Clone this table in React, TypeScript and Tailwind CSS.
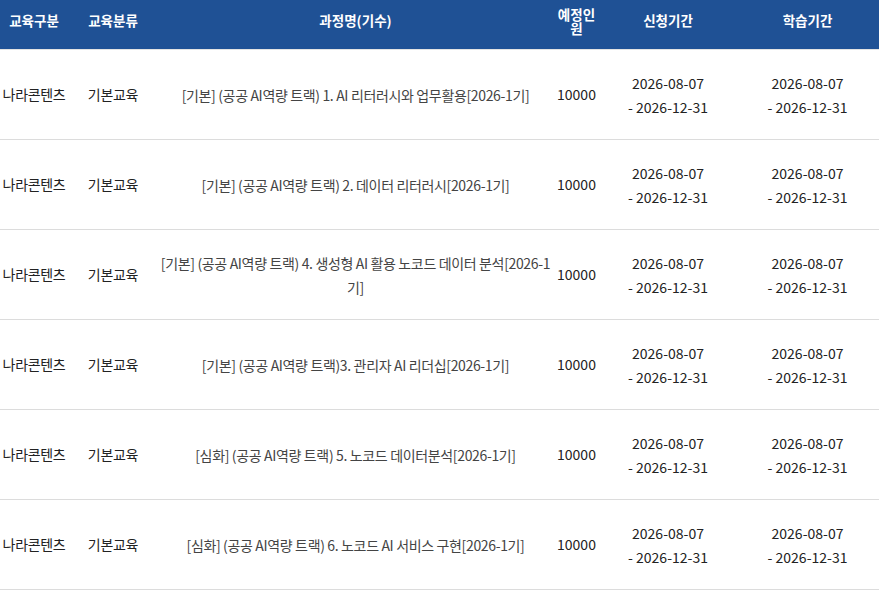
const rows = [
  { title: '[기본] (공공 AI역량 트랙) 1. AI 리터러시와 업무활용[2026-1기]' },
  { title: '[기본] (공공 AI역량 트랙) 2. 데이터 리터러시[2026-1기]' },
  { title: '[기본] (공공 AI역량 트랙) 4. 생성형 AI 활용 노코드 데이터 분석[2026-1기]' },
  { title: '[기본] (공공 AI역량 트랙)3. 관리자 AI 리더십[2026-1기]' },
  { title: '[심화] (공공 AI역량 트랙) 5. 노코드 데이터분석[2026-1기]' },
  { title: '[심화] (공공 AI역량 트랙) 6. 노코드 AI 서비스 구현[2026-1기]' },
];

const cols = 'grid grid-cols-[68px_90px_395px_47px_136px_143px]';

export default function App() {
  return (
    <div className="w-[879px] h-[597px] bg-white overflow-hidden font-['Noto_Sans_CJK_KR','Noto_Sans',sans-serif] text-[14px] text-[#222]">
      {/* header */}
      <div className={`${cols} h-[50px] bg-[#1f5195] text-white font-bold text-[13.5px] leading-[13px] text-center items-center pb-[8px] border-b border-[#e3e3e3]`}>
        <div>교육구분</div>
        <div>교육분류</div>
        <div>과정명(기수)</div>
        <div className="leading-[14px]">예정인<br />원</div>
        <div>신청기간</div>
        <div>학습기간</div>
      </div>

      {rows.map((r, i) => (
        <div key={i} className={`${cols} h-[90px] items-center text-center border-b border-[#dcdcdc]`}>
          <div className="tracking-[-0.3px]">나라콘텐츠</div>
          <div className="tracking-[-0.3px]">기본교육</div>
          <div className="leading-[24px] text-[#444] tracking-[-0.35px] break-all">{r.title}</div>
          <div>10000</div>
          <div className="leading-[24px]">2026-08-07<br />- 2026-12-31</div>
          <div className="leading-[24px]">2026-08-07<br />- 2026-12-31</div>
        </div>
      ))}
    </div>
  );
}
